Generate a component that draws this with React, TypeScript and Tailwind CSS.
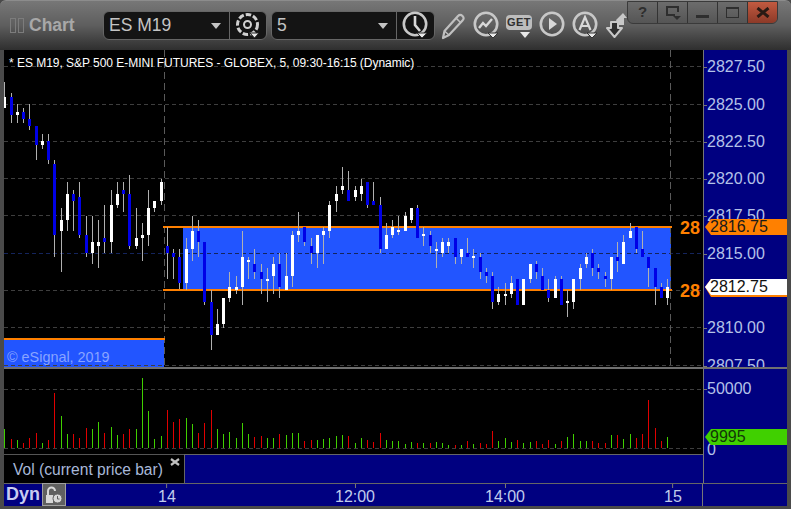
import type { ReactNode } from "react";

// x, wick top, wick bottom, body top, body bottom, w(hite)/b(lue), volume height, g(reen)/r(ed)
const candles: [number, number, number, number, number, string, number, string][] = [
  [4.5, 82, 108, 97, 108, "w", 19, "g"], [11.3, 93, 123, 97, 115, "b", 9, "r"], [17.3, 104, 123, 112, 115, "w", 8, "g"],
  [23.3, 108, 123, 112, 119, "b", 5, "r"], [29.3, 104, 130, 119, 126, "b", 10, "r"], [36.3, 126, 160, 126, 145, "b", 15, "r"],
  [42.3, 134, 149, 141, 145, "w", 5, "g"], [48.3, 134, 164, 141, 160, "b", 8, "r"], [54.3, 160, 257, 164, 235, "b", 55, "r"],
  [61.3, 208, 272, 220, 231, "w", 32, "g"], [67.3, 182, 231, 194, 220, "w", 14, "g"], [73.3, 190, 231, 194, 201, "b", 14, "r"],
  [79.3, 182, 238, 197, 235, "b", 10, "r"], [86.3, 216, 257, 235, 253, "b", 20, "r"], [92.3, 216, 264, 242, 253, "w", 19, "g"],
  [98.3, 220, 268, 242, 246, "w", 26, "g"], [104.3, 205, 253, 238, 242, "b", 15, "r"], [111.3, 190, 253, 205, 242, "w", 21, "g"],
  [117.3, 182, 208, 194, 205, "w", 13, "g"], [123.3, 182, 212, 190, 194, "b", 14, "r"], [129.3, 175, 249, 194, 246, "b", 19, "r"],
  [136.3, 208, 249, 238, 246, "w", 19, "g"], [142.3, 223, 261, 235, 238, "w", 70, "g"], [148.3, 190, 246, 208, 235, "w", 37, "g"],
  [154.3, 201, 212, 201, 208, "w", 9, "g"], [161.3, 179, 205, 182, 201, "w", 12, "g"], [167.3, 227, 279, 246, 253, "b", 38, "r"],
  [173.3, 249, 279, 253, 257, "b", 26, "r"], [179.3, 249, 289, 257, 283, "b", 29, "r"], [186.3, 238, 290, 249, 283, "w", 30, "g"],
  [192.3, 216, 261, 231, 249, "w", 24, "g"], [198.3, 220, 257, 231, 242, "b", 15, "r"], [204.3, 242, 305, 242, 302, "b", 25, "r"],
  [211.3, 290, 350, 302, 335, "b", 38, "r"], [217.3, 309, 335, 324, 335, "w", 19, "g"], [223.3, 298, 328, 298, 324, "w", 14, "g"],
  [229.3, 272, 302, 287, 298, "w", 16, "g"], [236.3, 276, 294, 287, 290, "w", 10, "g"], [242.3, 231, 305, 257, 287, "w", 25, "g"],
  [248.3, 257, 279, 260, 262, "w", 14, "g"], [254.3, 249, 279, 264, 272, "b", 11, "r"], [261.3, 264, 294, 272, 279, "b", 12, "r"],
  [267.3, 268, 302, 279, 281, "w", 10, "g"], [273.3, 257, 294, 264, 276, "w", 10, "g"], [279.3, 253, 298, 264, 287, "b", 14, "r"],
  [286.3, 253, 290, 276, 290, "w", 13, "g"], [292.3, 231, 287, 235, 276, "w", 15, "g"], [298.3, 212, 242, 231, 235, "w", 15, "g"],
  [304.3, 227, 246, 227, 242, "b", 7, "r"], [311.3, 238, 264, 246, 253, "b", 8, "r"], [317.3, 235, 268, 235, 253, "w", 8, "g"],
  [323.3, 227, 264, 231, 235, "w", 9, "g"], [329.3, 201, 238, 205, 231, "w", 10, "g"], [336.3, 186, 212, 194, 201, "w", 12, "g"],
  [342.3, 167, 194, 186, 190, "w", 13, "g"], [348.3, 171, 201, 190, 201, "b", 12, "r"], [355.3, 186, 201, 190, 197, "w", 5, "g"],
  [361.3, 179, 201, 186, 194, "w", 10, "g"], [367.3, 182, 208, 182, 205, "b", 8, "r"], [373.3, 182, 205, 201, 205, "b", 6, "r"],
  [380.3, 197, 253, 205, 249, "b", 15, "r"], [386.3, 223, 249, 235, 249, "w", 8, "g"], [392.3, 220, 238, 227, 235, "w", 7, "g"],
  [398.3, 216, 235, 230, 232, "w", 7, "g"], [405.3, 212, 231, 216, 231, "w", 4, "g"], [411.3, 208, 223, 208, 220, "w", 6, "g"],
  [417.3, 205, 238, 208, 238, "b", 5, "r"], [423.3, 227, 246, 234, 236, "w", 5, "g"], [430.3, 231, 253, 235, 246, "b", 5, "r"],
  [436.3, 242, 268, 249, 251, "w", 6, "g"], [442.3, 238, 257, 242, 253, "w", 5, "g"], [448.3, 238, 253, 242, 246, "w", 3, "g"],
  [455.3, 238, 264, 238, 257, "b", 3, "r"], [461.3, 249, 264, 249, 257, "w", 3, "g"], [467.3, 238, 257, 253, 257, "b", 7, "r"],
  [473.3, 249, 268, 256, 258, "w", 4, "g"], [480.3, 253, 279, 257, 272, "b", 5, "r"], [486.3, 268, 283, 272, 276, "b", 4, "r"],
  [492.3, 272, 309, 276, 302, "b", 17, "r"], [498.3, 287, 305, 294, 302, "w", 7, "g"], [505.3, 283, 305, 294, 296, "w", 10, "g"],
  [511.3, 276, 298, 283, 294, "w", 6, "g"], [517.3, 279, 305, 279, 305, "b", 8, "r"], [523.3, 279, 305, 279, 305, "w", 5, "g"],
  [530.3, 264, 283, 264, 279, "w", 6, "g"], [536.3, 261, 279, 264, 272, "b", 7, "r"], [542.3, 268, 290, 276, 290, "b", 4, "r"],
  [548.3, 279, 302, 290, 298, "b", 8, "r"], [555.3, 276, 298, 279, 298, "w", 4, "g"], [561.3, 276, 305, 279, 305, "b", 7, "r"],
  [567.3, 290, 317, 301, 303, "w", 11, "g"], [573.3, 279, 309, 279, 302, "w", 14, "g"], [580.3, 264, 290, 268, 279, "w", 7, "g"],
  [586.3, 253, 268, 257, 264, "w", 7, "g"], [592.3, 249, 276, 253, 268, "b", 7, "r"], [598.3, 264, 279, 268, 272, "b", 5, "r"],
  [605.3, 272, 287, 276, 279, "b", 5, "r"], [611.3, 257, 290, 257, 279, "w", 13, "g"], [617.3, 242, 272, 257, 261, "b", 13, "r"],
  [623.3, 235, 264, 242, 264, "w", 9, "g"], [630.3, 223, 238, 231, 238, "w", 14, "g"], [636.3, 227, 253, 227, 249, "b", 10, "r"],
  [642.3, 231, 257, 249, 257, "b", 14, "r"], [648.3, 257, 287, 257, 268, "b", 48, "r"], [655.3, 268, 305, 268, 287, "b", 20, "r"],
  [661.3, 283, 298, 287, 298, "b", 7, "r"], [667.3, 279, 305, 287, 298, "w", 11, "g"],
];

const priceLabels = [
  { label: "2827.50", y: 66 }, { label: "2825.00", y: 104 }, { label: "2822.50", y: 141 }, { label: "2820.00", y: 178 },
  { label: "2817.50", y: 215 }, { label: "2815.00", y: 253 }, { label: "2810.00", y: 327 },
  { label: "2807.50", y: 365 },
];
const gridY = [66, 104, 141, 178, 215, 253, 290, 327, 365];

function Caret({ className = "" }: { className?: string }) {
  return <span className={`block w-0 h-0 border-x-[5px] border-x-transparent border-t-[6px] border-t-[#c4c4c4] ${className}`} />;
}

// round toolbar icon with the little menu arrow at its lower right
function RingIcon({ children, menu = true }: { children: ReactNode; menu?: boolean }) {
  return (
    <svg width="27" height="29" viewBox="0 0 27 29" className="shrink-0">
      <circle cx="13" cy="13" r="11.2" fill="none" stroke="#c8c8c8" strokeWidth="2.6" />
      {children}
      {menu && <path d="M15 22h10l-5 5z" fill="#e8e8e8" stroke="#333" strokeWidth="1" />}
    </svg>
  );
}

function WinButton({ children, className = "" }: { children: ReactNode; className?: string }) {
  return (
    <div className={`h-[21px] flex items-center justify-center border-r border-[#333] ${className}`}>{children}</div>
  );
}

function PriceChart() {
  return (
    <svg width="699" height="317" viewBox="4 50 699 317" shapeRendering="crispEdges" className="block">
      <rect x="4" y="50" width="699" height="317" fill="#000" />
      <rect x="183" y="228" width="488" height="61" fill="#2255ff" />
      <rect x="4" y="340" width="160" height="27" fill="#2255ff" />
      {gridY.map((y) => (
        <line key={y} x1="4" x2="703" y1={y + 0.5} y2={y + 0.5} stroke={y === 253 ? "#14245c" : "#3e3e3e"} strokeWidth="1" strokeDasharray="4 3" />
      ))}
      <line x1="164.5" x2="164.5" y1="50" y2="367" stroke="#5a5a5a" strokeDasharray="7 4" />
      <line x1="670.5" x2="670.5" y1="50" y2="367" stroke="#5a5a5a" strokeDasharray="7 4" />
      <rect x="163" y="226" width="509" height="2" fill="#ff8000" />
      <rect x="163" y="289" width="509" height="2" fill="#ff8000" />
      <rect x="4" y="338" width="161" height="2" fill="#ff8000" />
      {candles.map(([x, wt, wb, bt, bb, c]) => {
        const px = Math.floor(x);
        return (
          <g key={x}>
            <rect x={px} y={wt} width="1" height={wb - wt} fill="#b0b0b0" />
            <rect x={px - 1} y={bt} width="3" height={bb - bt} fill={c === "w" ? "#fff" : "#0000e6"} />
          </g>
        );
      })}
    </svg>
  );
}

function VolumeChart() {
  return (
    <svg width="699" height="85" viewBox="4 369 699 85" shapeRendering="crispEdges" className="block">
      <rect x="4" y="369" width="699" height="85" fill="#000" />
      <line x1="4" x2="703" y1="389.5" y2="389.5" stroke="#3e3e3e" strokeDasharray="4 3" />
      <line x1="4" x2="703" y1="448.5" y2="448.5" stroke="#3e3e3e" strokeDasharray="4 3" />
      {candles.map(([x, , , , , , h, c]) => (
        <rect key={x} x={Math.floor(x)} y={448 - h} width="1" height={h} fill={c === "g" ? "#40d000" : "#e00000"} />
      ))}
    </svg>
  );
}

export default function App() {
  return (
    <div className="relative w-[791px] h-[509px] overflow-hidden bg-[#4a4a4a] font-['Liberation_Sans',Arial,sans-serif]">
      {/* Title bar + toolbar */}
      <header className="h-[50px] rounded-t-md border-t border-[#8c8c8c] bg-gradient-to-b from-[#777777] via-[#5e5e5e] to-[#2f2f2f] flex items-center pl-[10px]">
        <div className="flex gap-[2px]">
          <span className="w-[6px] h-[15px] border border-[#7c7c7c]" />
          <span className="w-[6px] h-[15px] border border-[#7c7c7c]" />
        </div>
        <span className="ml-[5px] w-[70px] text-[17.5px] font-bold text-[#a8a8a8]">Chart</span>
        <div className="ml-[4px] w-[164px] h-[29px] flex items-center rounded-md border border-[#666] bg-[#141414]">
          <span className="flex-1 pl-[5px] text-[17.5px] text-[#c4c4c4]">ES M19</span>
          <Caret className="mr-[8px]" />
          <div className="w-[37px] h-full border-l border-[#666] flex items-center justify-center">
            <svg width="26" height="27" viewBox="0 0 26 27">
              <circle cx="12.5" cy="12.5" r="10" fill="none" stroke="#d0d0d0" strokeWidth="3" strokeDasharray="5.500 2" />
              <circle cx="12.5" cy="12.5" r="3.500" fill="none" stroke="#d0d0d0" strokeWidth="2" />
              <path d="M15 21h9l-4.500 5z" fill="#e8e8e8" stroke="#222" />
            </svg>
          </div>
        </div>
        <div className="ml-[4px] w-[164px] h-[29px] flex items-center rounded-md border border-[#666] bg-[#141414]">
          <span className="flex-1 pl-[5px] text-[17.5px] text-[#c4c4c4]">5</span>
          <Caret className="mr-[8px]" />
          <div className="w-[38px] h-full border-l border-[#666] flex items-center justify-center">
            <RingIcon>
              <path d="M13 5v9l5 6" fill="none" stroke="#d8d8d8" strokeWidth="2.600" />
            </RingIcon>
          </div>
        </div>
        <div className="ml-[5px] flex items-center gap-[6px]">
          {/* pencil */}
          <svg width="27" height="28" viewBox="0 0 27 28" className="shrink-0">
            <path d="M3 26l1.500-7L18 4c1.500-1.500 3-1.500 4.500 0s1.500 3 0 4.500L9 23z" fill="none" stroke="#c0c0c0" strokeWidth="2.200" strokeLinejoin="round" />
            <path d="M4.500 19L9 23M16 6l5 5" fill="none" stroke="#c0c0c0" strokeWidth="1.500" />
          </svg>
          <RingIcon>
            <path d="M6 17l4-5 3 3 6-7" fill="none" stroke="#d8d8d8" strokeWidth="2.400" />
          </RingIcon>
          <div className="relative w-[27px] h-[29px] shrink-0">
            <div className="absolute left-0 top-[4px] w-[26px] h-[15px] rounded-sm bg-[#bdbdbd] flex items-center justify-center text-[11px] leading-none font-bold tracking-[0.5px] text-[#303030]">GET</div>
            <span className="absolute left-[14px] top-[21px] w-0 h-0 border-x-[5px] border-x-transparent border-t-[6px] border-t-[#e8e8e8]" />
          </div>
          <RingIcon menu={false}>
            <path d="M10 7l8 6-8 6z" fill="#d8d8d8" />
          </RingIcon>
          <RingIcon>
            <path d="M7.500 19L13 6l5.500 13M9.500 15h7" fill="none" stroke="#d8d8d8" strokeWidth="2.200" />
          </RingIcon>
          <svg width="22" height="28" viewBox="0 0 22 28" className="shrink-0">
            <path d="M2 16h4v-6h7v6h4l-7.500 9z" fill="#2f2f2f" stroke="#c8c8c8" strokeWidth="2" strokeLinejoin="round" />
            <path d="M11 8l7-7 4 5h-3v7h-6z" fill="#c8c8c8" />
          </svg>
        </div>
      </header>

      {/* Window buttons sit over the title bar */}
      <div className="absolute left-[627px] top-[1px] w-[151px] flex rounded-b-md border border-[#3a3a3a] bg-gradient-to-b from-[#6c6c6c] to-[#555555] overflow-hidden">
        <WinButton className="w-[30px] text-[15px] font-bold text-[#2e2e2e]">?</WinButton>
        <WinButton className="w-[30px]">
          <svg width="16" height="14" viewBox="0 0 16 14">
            <path d="M10 9H2V1h11v5" fill="none" stroke="#2e2e2e" strokeWidth="2" />
            <path d="M8 10h8l-4 4z" fill="#2e2e2e" />
          </svg>
        </WinButton>
        <WinButton className="w-[30px]">
          <span className="mt-[8px] w-[13px] h-[3px] bg-[#2e2e2e]" />
        </WinButton>
        <WinButton className="w-[30px]">
          <span className="w-[13px] h-[11px] border border-t-2 border-[#2e2e2e]" />
        </WinButton>
        <div className="flex-1 h-[21px] flex items-center justify-center bg-gradient-to-b from-[#c25a40] to-[#8c3a28]">
          <svg width="14" height="11" viewBox="0 0 14 11">
            <path d="M1.500 1l11 9M12.500 1l-11 9" stroke="#2a1a14" strokeWidth="3" />
          </svg>
        </div>
      </div>

      {/* Price pane */}
      <div className="flex pl-[4px] pr-[4px]">
        <div className="relative w-[699px] h-[317px]">
          <PriceChart />
          <span className="absolute left-[5px] top-[6px] text-[12px] leading-[14px] tracking-[-0.03px] text-white whitespace-nowrap">
            * ES M19, S&amp;P 500 E-MINI FUTURES - GLOBEX, 5, 09:30-16:15 (Dynamic)
          </span>
          <span className="absolute left-[3px] top-[299px] text-[14.4px] leading-[17px] text-[#88a4ff] whitespace-nowrap">© eSignal, 2019</span>
          <span className="absolute left-[676px] top-[168px] text-[18px] leading-[20px] font-bold text-[#ff8000]">28</span>
          <span className="absolute left-[676px] top-[231px] text-[18px] leading-[20px] font-bold text-[#ff8000]">28</span>
        </div>
        <div className="relative w-[84px] h-[317px] overflow-hidden bg-[#000080] border-l border-[#777]">
          {priceLabels.map((p) => (
            <div key={p.label} className="absolute left-0 flex items-center -translate-y-1/2" style={{ top: p.y - 49 }}>
              <span className="w-[3px] h-[1px] bg-[#777]" />
              <span className="text-[16px] leading-[18px] text-[#b4c2e8]">{p.label}</span>
            </div>
          ))}
          {/* last price tags */}
          <div className="absolute left-[1px] right-0 top-[169px] h-[16px] flex items-center pl-[5px] bg-[#ff8000] text-[16px] leading-none text-[#1a1a1a] [clip-path:polygon(0_50%,6px_0,100%_0,100%_100%,6px_100%)]">2816.75</div>
          <div className="absolute left-[1px] right-0 top-[229px] h-[18px] bg-[#ff8000] [clip-path:polygon(0_44%,6px_0,100%_0,100%_100%,6px_100%)]" />
          <div className="absolute left-[1px] right-0 top-[229px] h-[16px] flex items-center pl-[5px] bg-white text-[16px] leading-none text-[#111] [clip-path:polygon(0_50%,6px_0,100%_0,100%_100%,6px_100%)]">2812.75</div>
        </div>
      </div>

      <div className="h-[2px] mx-[4px] bg-[#707070]" />

      {/* Volume pane + legend */}
      <div className="flex pl-[4px] pr-[4px]">
        <div className="w-[699px] flex flex-col">
          <VolumeChart />
          <div className="h-[29px] flex border-t border-[#555]">
            <div className="relative w-[180px] bg-black pl-[9px] text-[15.6px] leading-[30px] text-[#a8b8d8] whitespace-nowrap">
              Vol (current price bar)
              <svg width="10" height="8" viewBox="0 0 10 8" className="absolute left-[166px] top-[3px]">
                <path d="M1 1l8 6M9 1L1 7" stroke="#c0c0c0" strokeWidth="2.200" />
              </svg>
            </div>
            <div className="flex-1 bg-[#000080] border-t border-l border-[#666] -mt-[1px]" />
          </div>
        </div>
        <div className="relative w-[84px] bg-[#000080] border-l border-[#777]">
          <div className="absolute left-0 top-[20px] flex items-center -translate-y-1/2">
            <span className="w-[3px] h-[1px] bg-[#777]" />
            <span className="text-[16px] leading-[18px] text-[#b4c2e8]">50000</span>
          </div>
          {/* the tag hides the top of the 0 label */}
          <span className="absolute left-[3px] top-[72px] text-[16px] leading-[18px] text-[#b4c2e8]">0</span>
          <div className="absolute left-[1px] right-0 top-[60px] h-[16px] flex items-center pl-[5px] bg-[#40d000] text-[16px] leading-none text-[#123808] [clip-path:polygon(0_50%,6px_0,100%_0,100%_100%,6px_100%)]">9995</div>
        </div>
      </div>

      {/* Time axis */}
      <div className="relative h-[23px] mx-[4px] flex bg-[#000080] border-t border-[#666]">
        <div className="w-[699px] h-full border-r border-[#777] flex items-center">
          <span className="pl-[2px] -mt-[2px] text-[18px] leading-none font-bold text-[#c8ccf0]">Dyn</span>
          <div className="ml-[2px] w-[24px] h-[23px] -mt-[1px] border border-[#a0a0a0] bg-[#606060] flex items-center justify-center">
            <svg width="20" height="20" viewBox="0 0 20 20">
              <path d="M4 10V6a3.500 3.500 0 0 1 7 0" fill="none" stroke="#d8d8d8" strokeWidth="2" />
              <rect x="2" y="10" width="7" height="8" fill="#d8d8d8" />
              <circle cx="13.500" cy="13.500" r="4.500" fill="#d8d8d8" stroke="#606060" />
              <path d="M13.500 11v3h2" fill="none" stroke="#606060" />
            </svg>
          </div>
        </div>
        {[
          { label: "14", x: 163 },
          { label: "12:00", x: 351 },
          { label: "14:00", x: 501 },
          { label: "15", x: 669 },
        ].map((t) => (
          <div key={t.label} className="absolute top-0 flex flex-col items-center -translate-x-1/2" style={{ left: t.x }}>
            <span className="w-[1px] h-[4px] bg-[#777]" />
            <span className="text-[16px] leading-[18px] text-[#c0ccec]">{t.label}</span>
          </div>
        ))}
      </div>
    </div>
  );
}
